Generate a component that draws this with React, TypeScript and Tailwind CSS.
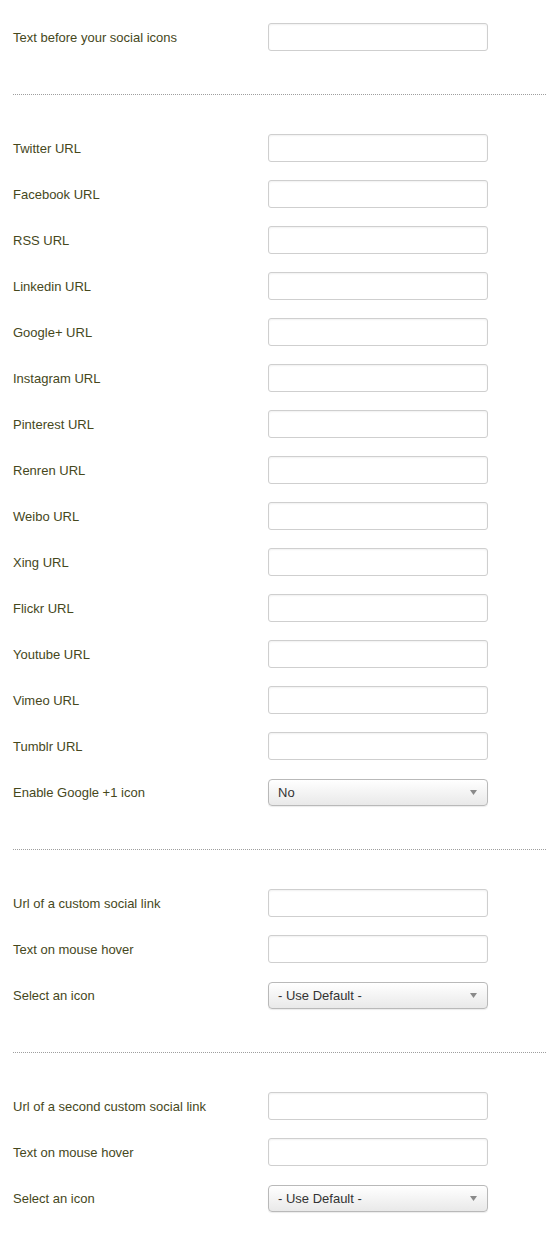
const font = { fontFamily: '"Liberation Sans", Arial, sans-serif' };

const TextRow = ({ label }: { label: string }) => (
  <div className="flex h-[46px] items-center">
    <label className="w-[255px] shrink-0 pt-[2px] text-[13px] text-[#46481c]">{label}</label>
    <input
      type="text"
      className="h-[28px] w-[220px] rounded-[3px] border border-[#cfcfcf] bg-white shadow-[inset_0_1px_2px_rgba(0,0,0,0.06)] outline-none"
    />
  </div>
);

const SelectRow = ({ label, value }: { label: string; value: string }) => (
  <div className="flex h-[46px] items-center">
    <label className="w-[255px] shrink-0 pt-[2px] text-[13px] text-[#46481c]">{label}</label>
    <div className="flex h-[27px] w-[220px] items-center justify-between rounded-[4px] border border-[#b9b9b9] bg-gradient-to-b from-white to-[#e9e9e9] pl-[9px] pr-[10px] pt-[1px] shadow-[0_1px_1px_rgba(0,0,0,0.08)]">
      <span className="text-[13px] text-[#333]">{value}</span>
      <svg width="7" height="5" viewBox="0 0 7 5">
        <path d="M0 0h7L3.5 5z" fill="#8a8a8a" />
      </svg>
    </div>
  </div>
);

const Divider = () => (
  <div className="ml-[13px] mt-[34px] mb-[30px] border-t border-dotted border-[#9e9e9e]" />
);

const socials = [
  "Twitter URL",
  "Facebook URL",
  "RSS URL",
  "Linkedin URL",
  "Google+ URL",
  "Instagram URL",
  "Pinterest URL",
  "Renren URL",
  "Weibo URL",
  "Xing URL",
  "Flickr URL",
  "Youtube URL",
  "Vimeo URL",
  "Tumblr URL",
];

export default function App() {
  return (
    <div className="min-h-[1234px] w-[546px] bg-white pt-[14px] pl-[13px]" style={font}>
      <TextRow label="Text before your social icons" />

      <div className="-ml-[13px]">
        <Divider />
      </div>

      {/* Social links */}
      {socials.map((s) => (
        <TextRow key={s} label={s} />
      ))}
      <SelectRow label="Enable Google +1 icon" value="No" />

      <div className="-ml-[13px]">
        <Divider />
      </div>

      {/* Custom link */}
      <TextRow label="Url of a custom social link" />
      <TextRow label="Text on mouse hover" />
      <SelectRow label="Select an icon" value="- Use Default -" />

      <div className="-ml-[13px]">
        <Divider />
      </div>

      {/* Second custom link */}
      <TextRow label="Url of a second custom social link" />
      <TextRow label="Text on mouse hover" />
      <SelectRow label="Select an icon" value="- Use Default -" />
    </div>
  );
}
